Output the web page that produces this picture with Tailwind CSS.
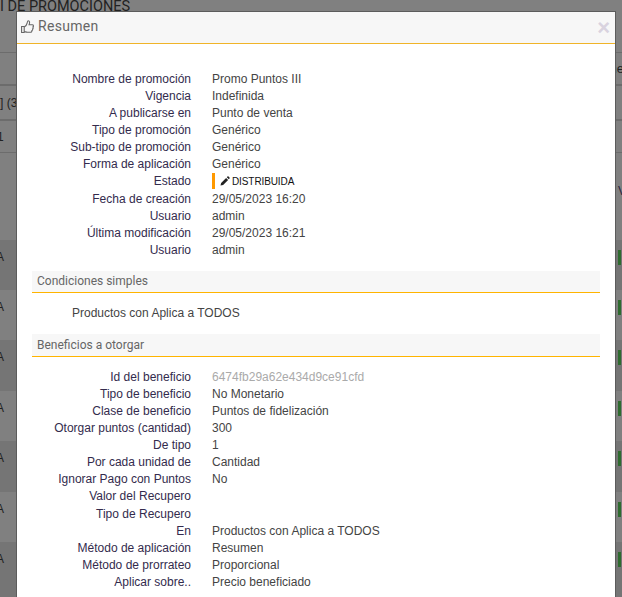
<!DOCTYPE html>
<html>
<head>
    <title>Resumen</title>
    <script src="https://cdn.jsdelivr.net/npm/@tailwindcss/browser@4"></script>
</head>
<body class="relative w-[622px] h-[597px] overflow-hidden bg-[#808080] font-['Liberation_Sans',sans-serif] text-[12px] text-[#444]">
    <!-- page behind the overlay -->
    <div class="h-[597px] overflow-hidden text-[#222]">
        <div class="h-[52px] text-[14.5px] leading-[13px] font-['Roboto',sans-serif] whitespace-nowrap">I DE PROMOCIONES</div>
        <div class="h-[32px] border-t border-[#6c6c6c] flex justify-end items-center"><span class="-mr-[2px] text-[13px]">ne</span></div>
        <div class="h-[35px] border-t-2 border-[#6c6c6c] flex items-center"><span>] (3</span></div>
        <div class="h-[33px] border-t-2 border-[#6c6c6c] flex items-center"><span class="-ml-[3px]">1</span></div>
        <div class="h-[88px] border-t border-[#6c6c6c] flex justify-end items-start pt-[29px]"><span class="-mr-[4px] text-[#2a2440]">V</span></div>
        <div class="flex flex-col">
            <div class="h-[50px] bg-[#757575] flex justify-between items-start pt-[10px]"><span class="-ml-[4px] leading-[15px]">A</span><span class="w-[3px] h-[15px] bg-[#2f6b2f] mr-[1px]"></span></div>
            <div class="h-[50px] flex justify-between items-start pt-[10px]"><span class="-ml-[4px] leading-[15px]">A</span><span class="w-[3px] h-[15px] bg-[#2f6b2f] mr-[1px]"></span></div>
            <div class="h-[51px] bg-[#757575] flex justify-between items-start pt-[10px]"><span class="-ml-[4px] leading-[15px]">A</span><span class="w-[3px] h-[15px] bg-[#2f6b2f] mr-[1px]"></span></div>
            <div class="h-[50px] flex justify-between items-start pt-[10px]"><span class="-ml-[4px] leading-[15px]">A</span><span class="w-[3px] h-[15px] bg-[#2f6b2f] mr-[1px]"></span></div>
            <div class="h-[51px] bg-[#757575] flex justify-between items-start pt-[10px]"><span class="-ml-[4px] leading-[15px]">A</span><span class="w-[3px] h-[15px] bg-[#2f6b2f] mr-[1px]"></span></div>
            <div class="h-[50px] flex justify-between items-start pt-[10px]"><span class="-ml-[4px] leading-[15px]">A</span><span class="w-[3px] h-[15px] bg-[#2f6b2f] mr-[1px]"></span></div>
            <div class="h-[55px] bg-[#757575] flex justify-between items-start pt-[10px]"><span class="-ml-[4px] leading-[15px]">A</span><span class="w-[3px] h-[15px] bg-[#2f6b2f] mr-[1px]"></span></div>
        </div>
    </div>

    <!-- modal -->
    <div class="absolute left-[17px] top-[12px] w-[598px] h-[600px] bg-white shadow-[0_0_0_1px_#5c5c5c]">
        <div class="h-[31px] bg-[#f7f7f7] flex items-center justify-between pl-[4px] pr-[5px]">
            <div class="flex items-center gap-[4px] text-[#666] text-[14px] font-['Roboto',sans-serif] tracking-[0.3px] -mt-[2px]">
                <svg width="13" height="14" viewBox="0 0 13 14" fill="none" stroke="#666" stroke-width="1.1"><path d="M0.6 6.5h2.6v6H0.6z"/><path d="M3.2 7c1.5-1 2.7-2.5 3-4.2 0.2-1 0.3-2 1.1-2 1.3 0 1.6 1.8 0.8 4h3.2c1.4 0 1.5 1.8 0.6 2.2 0.5 0.7 0.3 1.6-0.3 1.9 0.2 0.8-0.1 1.5-0.7 1.7 0.1 1-0.5 1.7-1.5 1.7H6.5c-1.3 0-2.2-0.6-3.3-0.8"/></svg>
                <span>Resumen</span>
            </div>
            <span class="text-[22px] leading-none font-bold text-[#d9d3df]">×</span>
        </div>
        <div class="h-[1px] bg-[#f0b429]"></div>

        <div class="pt-[26px] px-[15px]">
            <div class="flex flex-col">
                <div class="flex h-[17px] items-center"><span class="w-[159px] text-right text-[#332b4d]">Nombre de promoción</span><span class="ml-[21px]">Promo Puntos III</span></div>
                <div class="flex h-[17px] items-center"><span class="w-[159px] text-right text-[#332b4d]">Vigencia</span><span class="ml-[21px]">Indefinida</span></div>
                <div class="flex h-[17px] items-center"><span class="w-[159px] text-right text-[#332b4d]">A publicarse en</span><span class="ml-[21px]">Punto de venta</span></div>
                <div class="flex h-[17px] items-center"><span class="w-[159px] text-right text-[#332b4d]">Tipo de promoción</span><span class="ml-[21px]">Genérico</span></div>
                <div class="flex h-[17px] items-center"><span class="w-[159px] text-right text-[#332b4d]">Sub-tipo de promoción</span><span class="ml-[21px]">Genérico</span></div>
                <div class="flex h-[17px] items-center"><span class="w-[159px] text-right text-[#332b4d]">Forma de aplicación</span><span class="ml-[21px]">Genérico</span></div>
                <div class="flex h-[18px] items-center"><span class="w-[159px] text-right text-[#332b4d]">Estado</span><span class="ml-[21px] flex items-center gap-[2px] text-[10px] text-[#111] tracking-[-0.1px]"><span class="w-[3px] h-[16px] bg-[#ff9900] mr-[3px]"></span><svg width="10" height="10" viewBox="0 0 10 10" fill="#222"><path d="M0.5 9.5l0.6-2.6 5-5 2 2-5 5zM6.8 1.2l0.7-0.7c0.3-0.3 0.7-0.3 1 0l1 1c0.3 0.3 0.3 0.7 0 1l-0.7 0.7z"/></svg>DISTRIBUIDA</span></div>
                <div class="flex h-[17px] items-center"><span class="w-[159px] text-right text-[#332b4d]">Fecha de creación</span><span class="ml-[21px]">29/05/2023 16:20</span></div>
                <div class="flex h-[17px] items-center"><span class="w-[159px] text-right text-[#332b4d]">Usuario</span><span class="ml-[21px]">admin</span></div>
                <div class="flex h-[17px] items-center"><span class="w-[159px] text-right text-[#332b4d]">Última modificación</span><span class="ml-[21px]">29/05/2023 16:21</span></div>
                <div class="flex h-[17px] items-center"><span class="w-[159px] text-right text-[#332b4d]">Usuario</span><span class="ml-[21px]">admin</span></div>
            </div>

            <div class="mt-[13px] h-[21px] bg-[#f7f7f7] pl-[5px] pb-[1px] flex items-center text-[#666] font-['Roboto',sans-serif]">Condiciones simples</div>
            <div class="h-[1px] bg-[#ffb400]"></div>
            <div class="h-[41px] pl-[40px] pb-[2px] flex items-center">Productos con Aplica a TODOS</div>
            <div class="h-[22px] bg-[#f7f7f7] pl-[5px] pb-[1px] flex items-center text-[#666] font-['Roboto',sans-serif]">Beneficios a otorgar</div>
            <div class="h-[1px] bg-[#ffb400]"></div>

            <div class="flex flex-col mt-[11px]">
                <div class="flex h-[17px] items-center"><span class="w-[159px] text-right text-[#332b4d]">Id del beneficio</span><span class="ml-[21px] text-[#aaa]">6474fb29a62e434d9ce91cfd</span></div>
                <div class="flex h-[17px] items-center"><span class="w-[159px] text-right text-[#332b4d]">Tipo de beneficio</span><span class="ml-[21px]">No Monetario</span></div>
                <div class="flex h-[17px] items-center"><span class="w-[159px] text-right text-[#332b4d]">Clase de beneficio</span><span class="ml-[21px]">Puntos de fidelización</span></div>
                <div class="flex h-[17px] items-center"><span class="w-[159px] text-right text-[#332b4d]">Otorgar puntos (cantidad)</span><span class="ml-[21px]">300</span></div>
                <div class="flex h-[17px] items-center"><span class="w-[159px] text-right text-[#332b4d]">De tipo</span><span class="ml-[21px]">1</span></div>
                <div class="flex h-[17px] items-center"><span class="w-[159px] text-right text-[#332b4d]">Por cada unidad de</span><span class="ml-[21px]">Cantidad</span></div>
                <div class="flex h-[17px] items-center"><span class="w-[159px] text-right text-[#332b4d]">Ignorar Pago con Puntos</span><span class="ml-[21px]">No</span></div>
                <div class="flex h-[18px] items-center"><span class="w-[159px] text-right text-[#332b4d]">Valor del Recupero</span></div>
                <div class="flex h-[17px] items-center"><span class="w-[159px] text-right text-[#332b4d]">Tipo de Recupero</span></div>
                <div class="flex h-[17px] items-center"><span class="w-[159px] text-right text-[#332b4d]">En</span><span class="ml-[21px]">Productos con Aplica a TODOS</span></div>
                <div class="flex h-[17px] items-center"><span class="w-[159px] text-right text-[#332b4d]">Método de aplicación</span><span class="ml-[21px]">Resumen</span></div>
                <div class="flex h-[17px] items-center"><span class="w-[159px] text-right text-[#332b4d]">Método de prorrateo</span><span class="ml-[21px]">Proporcional</span></div>
                <div class="flex h-[17px] items-center"><span class="w-[159px] text-right text-[#332b4d]">Aplicar sobre..</span><span class="ml-[21px]">Precio beneficiado</span></div>
            </div>
        </div>
    </div>
</body>
</html>
